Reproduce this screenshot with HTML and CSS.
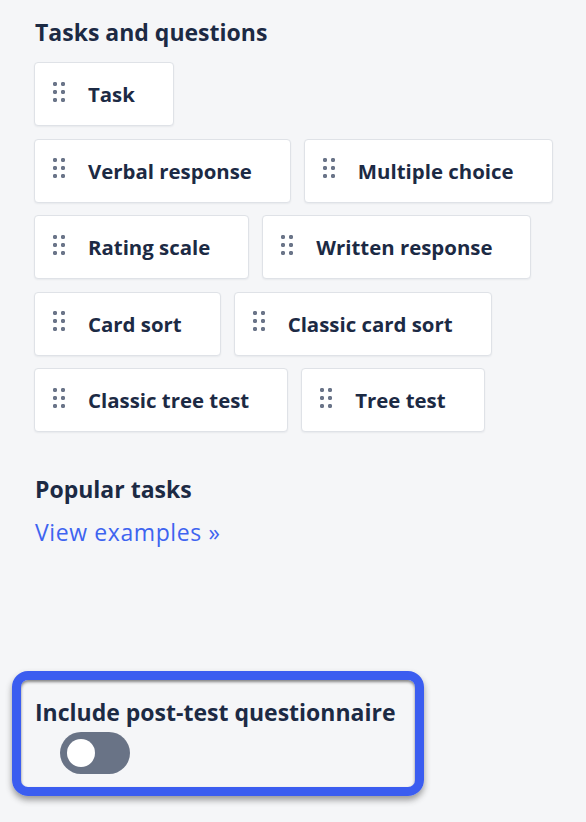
FILE: index.html
```html
<!DOCTYPE html>
<html>

<head>
    <title>Tasks and questions</title>
    <link rel="stylesheet" href="styles.css">
</head>

<body>
    <div class="panel">
        <h2 class="section-title">Tasks and questions</h2>

        <div class="block-list">
            <div class="block-row">
                <div class="block"><span class="handle"></span>Task</div>
            </div>
            <div class="block-row">
                <div class="block"><span class="handle"></span>Verbal response</div>
                <div class="block"><span class="handle"></span>Multiple choice</div>
            </div>
            <div class="block-row">
                <div class="block"><span class="handle"></span>Rating scale</div>
                <div class="block"><span class="handle"></span>Written response</div>
            </div>
            <div class="block-row">
                <div class="block"><span class="handle"></span>Card sort</div>
                <div class="block"><span class="handle"></span>Classic card sort</div>
            </div>
            <div class="block-row">
                <div class="block"><span class="handle"></span>Classic tree test</div>
                <div class="block"><span class="handle"></span>Tree test</div>
            </div>
        </div>

        <h2 class="section-title popular">Popular tasks</h2>
        <a class="examples-link" href="#">View examples &raquo;</a>

        <div class="questionnaire">
            <div class="questionnaire-label">Include post-test questionnaire</div>
            <div class="toggle"><span class="knob"></span></div>
        </div>
    </div>
</body>

</html>
```

FILE: styles.css
```css
body {
    margin: 0;
    padding: 0;
    background-color: #f5f6f8;
    font-family: "Open Sans", "Liberation Sans", Arial, sans-serif;
    color: #1c2a44;
}

.panel {
    padding: 18px 0 0 34px;
    height: 822px;
    box-sizing: border-box;
}

.section-title {
    font-size: 23px;
    font-weight: 700;
    line-height: 28px;
    margin: 0 0 16px 1px;
}

.block-list {
    display: flex;
    flex-direction: column;
    gap: 12.5px;
}

.block-row {
    display: flex;
    gap: 13px;
}

.block {
    display: flex;
    align-items: center;
    height: 64px;
    box-sizing: border-box;
    padding: 0 38px 0 16px;
    background-color: #fff;
    border: 1px solid #dfe2e7;
    border-radius: 4px;
    box-shadow: 0 1px 2px rgba(20, 30, 50, 0.06);
    font-size: 20.4px;
    font-weight: 700;
    white-space: nowrap;
}

/* six dot drag handle */
.handle {
    width: 16px;
    height: 24px;
    margin: 0 21px 5px 0;
    flex-shrink: 0;
    background-image: radial-gradient(circle, #6b7589 1.9px, transparent 2.4px);
    background-size: 8px 8px;
}

.popular {
    margin-top: 43px;
    margin-bottom: 15px;
}

.examples-link {
    display: block;
    color: #3e64f0;
    text-decoration: none;
    font-size: 23px;
    line-height: 28px;
    letter-spacing: 0.6px;
    margin-left: 1px;
}

.questionnaire {
    margin: 125px 0 0 -22px;
    width: 412px;
    box-sizing: border-box;
    padding: 18px 0 13px 14px;
    border: 9px solid #3b5df0;
    border-radius: 16px;
    box-shadow: inset 0 2px 3px rgba(40, 40, 40, 0.55), 0 4px 6px rgba(40, 40, 40, 0.45);
}

.questionnaire-label {
    font-size: 23px;
    font-weight: 700;
    line-height: 28px;
}

.toggle {
    position: relative;
    width: 70px;
    height: 42px;
    margin: 6px 0 0 25px;
    border-radius: 21px;
    background-color: #697386;
}

.knob {
    position: absolute;
    left: 7px;
    top: 7px;
    width: 28px;
    height: 28px;
    border-radius: 50%;
    background-color: #fff;
}
```
